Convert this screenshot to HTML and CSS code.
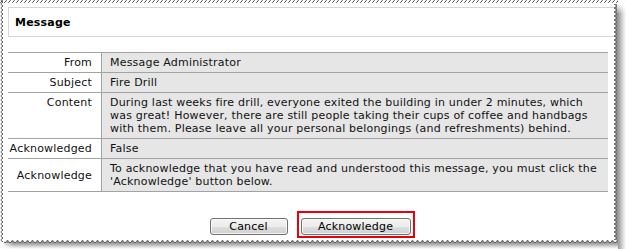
FILE: index.html
```html
<!DOCTYPE html>
<html>
<head>
<meta charset="utf-8">
<link rel="stylesheet" href="styles.css">
</head>
<body>
<div class="paper">
  <div class="header">Message</div>
  <table class="details">
    <colgroup><col class="c-label"><col class="c-value"></colgroup>
    <tr><td class="label">From</td><td class="value">Message Administrator</td></tr>
    <tr><td class="label">Subject</td><td class="value">Fire Drill</td></tr>
    <tr><td class="label top">Content</td><td class="value">During last weeks fire drill, everyone exited the building in under 2 minutes, which was great! However, there are still people taking their cups of coffee and handbags with them. Please leave all your personal belongings (and refreshments) behind.</td></tr>
    <tr><td class="label">Acknowledged</td><td class="value">False</td></tr>
    <tr><td class="label">Acknowledge</td><td class="value">To acknowledge that you have read and understood this message, you must click the 'Acknowledge' button below.</td></tr>
  </table>
  <div class="actions">
    <button class="btn btn-cancel">Cancel</button>
    <div class="highlight"><button class="btn btn-ack">Acknowledge</button></div>
  </div>
</div>
<svg class="edges" width="626" height="249" viewBox="0 0 626 249" xmlns="http://www.w3.org/2000/svg">
  <defs>
    <pattern id="topEdge" patternUnits="userSpaceOnUse" x="0" y="0" width="4" height="3">
      <line x1="0.3" y1="2.8" x2="2.6" y2="0.2" stroke="#333" stroke-width="0.9"/>
    </pattern>
    <pattern id="leftEdge" patternUnits="userSpaceOnUse" x="0" y="0" width="4" height="4">
      <polyline points="0.6,0 3,2 0.6,4" fill="none" stroke="#444" stroke-width="0.9"/>
    </pattern>
    <linearGradient id="gradR" gradientUnits="userSpaceOnUse" x1="0" y1="0" x2="12" y2="0">
      <stop offset="0" stop-color="#6e6e6e"/>
      <stop offset="0.35" stop-color="#9a9a9a"/>
      <stop offset="0.75" stop-color="#dcdcdc"/>
      <stop offset="1" stop-color="#ffffff"/>
    </linearGradient>
    <pattern id="rightEdge" patternUnits="userSpaceOnUse" x="614" y="0" width="12" height="4">
      <rect x="0" y="0" width="12" height="4" fill="url(#gradR)"/>
      <polygon points="0,0 3,2 0,4" fill="#ffffff"/>
      <polyline points="0,0 3,2 0,4" fill="none" stroke="#555" stroke-width="0.9"/>
    </pattern>
    <linearGradient id="gradB" gradientUnits="userSpaceOnUse" x1="0" y1="0" x2="0" y2="9">
      <stop offset="0" stop-color="#6e6e6e"/>
      <stop offset="0.35" stop-color="#9a9a9a"/>
      <stop offset="0.75" stop-color="#dcdcdc"/>
      <stop offset="1" stop-color="#ffffff"/>
    </linearGradient>
    <pattern id="bottomEdge" patternUnits="userSpaceOnUse" x="0" y="240" width="5" height="9">
      <rect x="0" y="0" width="5" height="9" fill="url(#gradB)"/>
      <polygon points="0,0 0,3 2.5,0.2 5,3 5,0" fill="#ffffff"/>
      <polyline points="0,3 2.5,0.2 5,3" fill="none" stroke="#555" stroke-width="0.9"/>
    </pattern>
    <linearGradient id="fadeTop" x1="0" y1="0" x2="0" y2="1">
      <stop offset="0" stop-color="#fff" stop-opacity="1"/>
      <stop offset="1" stop-color="#fff" stop-opacity="0"/>
    </linearGradient>
    <linearGradient id="fadeLeft" x1="0" y1="0" x2="1" y2="0">
      <stop offset="0" stop-color="#fff" stop-opacity="1"/>
      <stop offset="1" stop-color="#fff" stop-opacity="0"/>
    </linearGradient>
  </defs>
  <rect x="0" y="0" width="618" height="3" fill="url(#topEdge)"/>
  <rect x="0" y="0" width="4" height="242" fill="url(#leftEdge)"/>
  <rect x="614" y="4" width="12" height="245" fill="url(#rightEdge)"/>
  <rect x="4" y="240" width="614" height="9" fill="url(#bottomEdge)"/>
  <rect x="617" y="4" width="9" height="10" fill="url(#fadeTop)"/>
  <rect x="0" y="243" width="14" height="6" fill="url(#fadeLeft)"/>
</svg>
</body>
</html>
```
FILE: styles.css
```css
html, body {
  margin: 0;
  padding: 0;
  background: #ffffff;
}
body {
  width: 626px;
  height: 249px;
  position: relative;
  overflow: hidden;
  font-family: "DejaVu Sans", Verdana, sans-serif;
  font-size: 11px;
  letter-spacing: 0.2px;
  color: #111;
}
.paper {
  padding: 7px 0 0 8px;
}
.header {
  margin-right: 8px;
  border: 1px solid #d6d6d6;
  padding: 8px 6px 7px 6px;
  line-height: 13px;
  font-weight: bold;
  color: #000;
}
.details {
  margin-top: 15px;
  width: 600px;
  table-layout: fixed;
  border-collapse: separate;
  border-spacing: 0;
  border-top: 1px solid #a3a3a3;
}
.c-label { width: 94px; }
.c-value { width: 506px; }
.details td {
  border-bottom: 1px solid #a3a3a3;
  padding: 3px 9px 3px 8px;
  line-height: 13px;
  vertical-align: middle;
}
.details td.label {
  text-align: right;
  padding-left: 0;
  border-right: 1px solid #a3a3a3;
  background: #ffffff;
}
.details td.top {
  vertical-align: top;
}
.details td.value {
  background: #e6e6e6;
}
.actions {
  margin-top: 19px;
  display: flex;
  justify-content: center;
  align-items: flex-start;
  gap: 9px;
  padding-left: 4px;
  width: 600px;
}
.highlight {
  border: 2px solid #e8000b;
  padding: 5px 2px 1px 2px;
  display: flex;
}
.btn {
  font-family: "DejaVu Sans", Verdana, sans-serif;
  font-size: 11px;
  letter-spacing: 0.2px;
  line-height: 13px;
  height: 17px;
  padding: 0;
  margin: 0;
  color: #000;
  border: 1px solid #707070;
  border-radius: 3px;
  background: linear-gradient(#f4f4f4 0%, #ececec 50%, #dedede 52%, #d0d0d0 100%);
  box-shadow: inset 0 0 0 1px rgba(255,255,255,0.75);
}
.btn-cancel {
  width: 78px;
  margin-top: 7px;
}
.btn-ack {
  width: 110px;
}
.edges {
  position: absolute;
  left: 0;
  top: 0;
  pointer-events: none;
}
```
